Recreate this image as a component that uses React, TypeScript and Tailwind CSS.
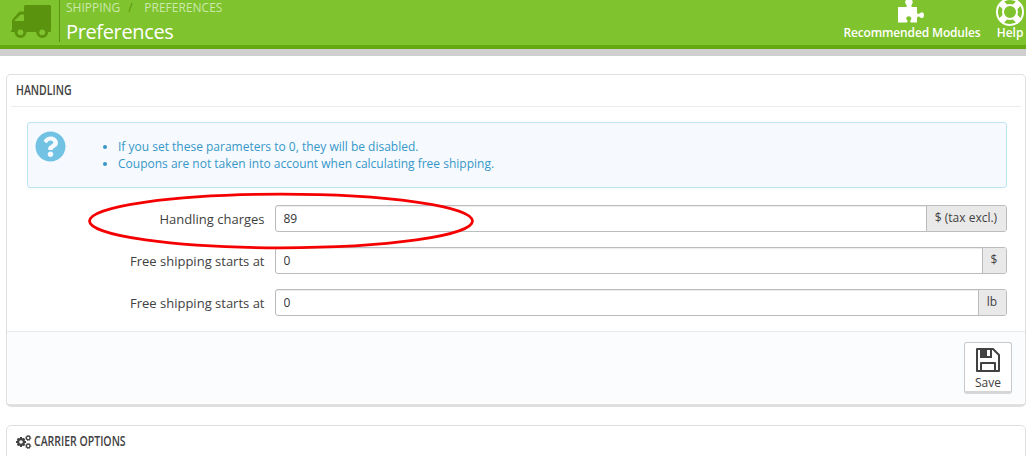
import type { ReactNode } from 'react'
import { FaQuestionCircle } from 'react-icons/fa'

const notes = [
  'If you set these parameters to 0, they will be disabled.',
  'Coupons are not taken into account when calculating free shipping.',
]

const fields = [
  { label: 'Handling charges', value: '89', unit: '$ (tax excl.)', cls: 'w-[80px]' },
  { label: 'Free shipping starts at', value: '0', unit: '$', cls: 'w-[24px]' },
  { label: 'Free shipping starts at', value: '0', unit: 'lb', cls: 'w-[28px]' },
]

function TruckIcon() {
  return (
    <svg width="42" height="34" viewBox="0 0 42 34" className="shrink-0">
      <path
        fill="#5a930d"
        fillRule="evenodd"
        d="M15.500 0H39.500Q41 0 41 1.500V25.500Q41 27 39.500 27H38.200A6 6 0 1 1 26.200 27H16.500A6 6 0 1 1 4.500 27H1.500Q-.5 26.500 2 25V16Q2 14.800 3 13.800L8.500 7.600Q9.500 6.500 11 6.500H14V1.500Q14 0 15.500 0ZM10.700 9.500L4.500 15.500V16H14V9.500Z"
      />
      <circle cx="10.500" cy="27.300" r="2.900" fill="#7fc32e" />
      <circle cx="32.200" cy="27.300" r="2.900" fill="#7fc32e" />
    </svg>
  )
}

function PuzzleIcon() {
  return (
    <svg width="28" height="24" viewBox="0 0 28 24" fill="#fff">
      <path d="M1 7H8.500Q10.200 7 9.800 5.500Q8 3.500 8.200 2Q8.500 -1 12 -1Q15.500 -1 15.700 2Q15.700 3.500 14.300 5.500Q14 7 15.500 7H20V12.500Q20 14.500 22 13.800Q24 12 25.500 12.300Q27 13 27 15Q27 17.500 25.500 18Q24 18.200 22 16.500Q20 16 20 18V22.500H14.500Q12.800 22.500 13.300 20.800Q14.500 19.500 14.300 18Q14 16.200 11.800 16.200Q9.300 16.200 9.200 18Q9.200 19.500 10.500 20.800Q11 22.500 9 22.500H1Z" />
    </svg>
  )
}

function LifeRingIcon() {
  return (
    <svg width="28" height="28" viewBox="0 0 28 28" fill="none" stroke="#fff">
      <circle cx="14" cy="14" r="13" strokeWidth="2" />
      <circle cx="14" cy="14" r="7" strokeWidth="2" />
      <path strokeWidth="6.500" d="M4.800 4.800L9.300 9.300M18.700 18.700L23.200 23.200M23.200 4.800L18.700 9.300M9.300 18.700L4.800 23.200" />
    </svg>
  )
}

function GearsIcon() {
  return (
    <svg width="16" height="14" viewBox="0 0 16 14" fill="none" stroke="#414141" className="mr-[2px] shrink-0">
      <circle cx="5" cy="7" r="2.900" strokeWidth="2.200" />
      <path strokeWidth="2" d="M5 2V4M5 10V12M0 7H2M8 7H10M1.500 3.500L2.900 4.900M7.100 9.100L8.500 10.500M8.500 3.500L7.100 4.900M2.900 9.100L1.500 10.500" />
      <circle cx="12.200" cy="3" r="1.800" strokeWidth="1.300" />
      <circle cx="12.200" cy="3" r="2.600" strokeWidth="0.800" strokeDasharray="1.200 0.840" />
      <circle cx="12.200" cy="11" r="1.800" strokeWidth="1.300" />
      <circle cx="12.200" cy="11" r="2.600" strokeWidth="0.800" strokeDasharray="1.200 0.840" />
    </svg>
  )
}

function SaveIcon() {
  return (
    <svg width="24" height="24" viewBox="0 0 24 24" className="shrink-0">
      <path
        fill="none"
        stroke="#414141"
        strokeWidth="2"
        strokeLinejoin="round"
        d="M1 1H17L23 7V23H1ZM5 23V15H19V23"
      />
      <path fill="#414141" fillRule="evenodd" d="M4 1H16V10H4ZM11 2H14V8H11Z" />
    </svg>
  )
}

function PanelTitle({ icon, children }: { icon?: ReactNode; children: ReactNode }) {
  return (
    <div className="mx-[4px] flex h-[32px] items-center border-b border-[#eaedef] pl-[5px] text-[14px] font-semibold text-[#414141]">
      {icon}
      <span className="origin-left scale-x-[0.75] pb-[2px] whitespace-nowrap">{children}</span>
    </div>
  )
}

export default function App() {
  return (
    <div className="h-[456px] w-[1026px] overflow-hidden bg-white font-['Open_Sans',sans-serif] text-[12px] text-[#414141]">
      <header className="flex h-[56px] border-b-[7px] border-[#cfcfcf]">
        <div className="flex grow justify-between border-b-4 border-[#66a80f] bg-[#7fc32e]">
          <div className="flex">
            <div className="flex h-[42px] w-[60px] border-r border-[#5a930d] pt-[5px] pl-[10px]">
              <TruckIcon />
            </div>
            <div className="pl-[6px]">
              <div className="flex h-[16px] text-[12px] leading-[15px] text-[#cbe9aa]">
                <span>SHIPPING</span>
                <span className="w-[24px] pl-[8px] text-[#5a930d]">/</span>
                <span>PREFERENCES</span>
              </div>
              <h1 className="text-[20px] leading-[31px] tracking-[-0.36px] text-white">Preferences</h1>
            </div>
          </div>
          <div className="flex pr-[2px] text-[12px] font-semibold text-white">
            <div className="flex w-[138px] flex-col items-center">
              <div className="h-[24px] pr-[2px]">
                <PuzzleIcon />
              </div>
              <span className="leading-[18px] tracking-[-0.15px] whitespace-nowrap">Recommended Modules</span>
            </div>
            <div className="ml-[15px] flex w-[28px] flex-col items-center">
              <div className="-mt-[2px] h-[26px]">
                <LifeRingIcon />
              </div>
              <span className="leading-[18px]">Help</span>
            </div>
          </div>
        </div>
      </header>

      <main className="pt-[18px] pl-[6px]">
        <section className="h-[333px] rounded-[5px] border border-b-[3px] border-[#dfdfdf] bg-white">
          <PanelTitle>HANDLING</PanelTitle>

          <div className="mt-[15px] ml-[20px] flex h-[66px] w-[980px] rounded-[3px] border border-[#bce4f3] bg-[#f6fafe] text-[#3597c9]">
            <FaQuestionCircle className="mt-[8px] ml-[7px] size-[31px] text-[#72c3e3]" />
            <ul className="mt-[15px] ml-[52px] list-disc leading-[17px]">
              {notes.map((note) => (
                <li key={note}>{note}</li>
              ))}
            </ul>
          </div>

          <div className="relative mt-[17px] flex w-[1000px] flex-col gap-[15px]">
            {fields.map((field) => (
              <div key={field.unit} className="flex h-[27px]">
                <label className="w-[268px] pr-[10.500px] text-right text-[13px] leading-[28px]">{field.label}</label>
                <div className="flex grow overflow-hidden rounded-[3px] border border-[#bbbcbd]">
                  <input
                    className="min-w-0 grow px-[7.500px] pt-[1px] text-[12px] text-[#333] shadow-[inset_0_1px_1px_rgba(0,0,0,0.08)] outline-none"
                    defaultValue={field.value}
                  />
                  <span
                    className={`flex shrink-0 justify-center border-l border-[#bbbcbd] bg-[#e9e9e9] pr-[1px] leading-[24px] whitespace-nowrap ${field.cls}`}
                  >
                    {field.unit}
                  </span>
                </div>
              </div>
            ))}
            <svg width="388" height="60" viewBox="0 0 388 60" className="pointer-events-none absolute -top-[14px] left-[80px]">
              <ellipse cx="194" cy="30" rx="191.500" ry="26.800" fill="none" stroke="#f50000" strokeWidth="2.800" />
            </svg>
          </div>

          <footer className="mt-[15px] flex h-[72px] justify-end border-t border-[#e6e8ea] bg-[#fbfcfe] pt-[10px] pr-[13px]">
            <button className="flex h-[52px] w-[48px] flex-col items-center rounded-[3px] border border-b-[3px] border-[#c9c9c9] border-b-[#d6d6d6] bg-white pt-[5px]">
              <SaveIcon />
              <span className="pt-[1px] leading-[20px]">Save</span>
            </button>
          </footer>
        </section>

        <section className="mt-[18px] h-[60px] rounded-[5px] border border-[#dfdfdf] bg-white">
          <PanelTitle icon={<GearsIcon />}>CARRIER OPTIONS</PanelTitle>
        </section>
      </main>
    </div>
  )
}
